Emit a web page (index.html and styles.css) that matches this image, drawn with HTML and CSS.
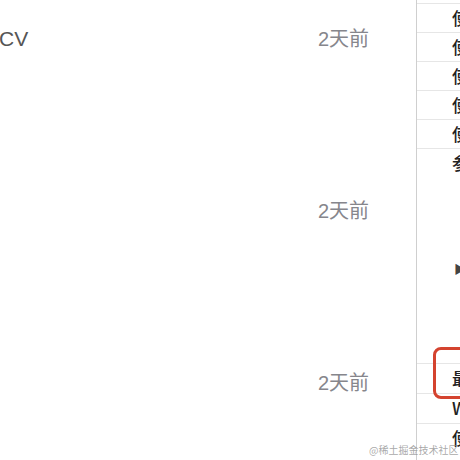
FILE: index.html
```html
<!DOCTYPE html>
<html lang="zh">
<head>
<meta charset="utf-8">
<link rel="stylesheet" href="styles.css">
</head>
<body>
<div class="page">
  <div class="list">
    <div class="item"><span class="title">CV</span><span class="time">2天前</span></div>
    <div class="item"><span class="title"></span><span class="time">2天前</span></div>
    <div class="item"><span class="title"></span><span class="time">2天前</span></div>
  </div>
  <div class="panel">
    <div class="row">使</div>
    <div class="row">使</div>
    <div class="row">使</div>
    <div class="row">使</div>
    <div class="row">使</div>
    <div class="row last">参</div>
    <div class="arrow">▶</div>
    <div class="row">最</div>
    <div class="row">W</div>
    <div class="row">使</div>
    <div class="highlight"></div>
  </div>
</div>
<div class="watermark">@稀土掘金技术社区</div>
</body>
</html>
```

FILE: styles.css
```css
html, body {
  margin: 0;
  padding: 0;
  width: 460px;
  height: 460px;
  overflow: hidden;
  background: #fff;
}
body {
  position: relative;
  font-family: "Noto Sans CJK SC", "Liberation Sans", sans-serif;
}
.page {
  display: flex;
  width: 520px;
  height: 460px;
}
.list {
  width: 416px;
  flex: none;
  padding-top: 25px;
}
.item {
  height: 172px;
  display: flex;
  align-items: flex-start;
  justify-content: space-between;
  padding-right: 47px;
  font-family: "Liberation Sans", "Noto Sans CJK SC", sans-serif;
}
.title {
  font-size: 21px;
  line-height: 28px;
  color: #555;
  margin-left: -1px;
}
.time {
  font-size: 20px;
  line-height: 28px;
  color: #86868c;
}
.panel {
  position: relative;
  flex: none;
  width: 100px;
  border-left: 1px solid #cfcfcf;
  padding-top: 3px;
}
.row {
  height: 30px;
  box-sizing: border-box;
  border-top: 1px solid #e6e6e6;
  padding-left: 35px;
  font-size: 17px;
  line-height: 28px;
  color: #222;
  font-weight: 500;
}
.row:nth-child(-n+6) {
  height: 29px;
  line-height: 27px;
}
.arrow {
  margin-top: 77px;
  height: 29px;
  padding-left: 37px;
  font-size: 12px;
  line-height: 29px;
  color: #444;
  margin-bottom: 80px;
}
.highlight {
  position: absolute;
  left: 16px;
  top: 347px;
  width: 90px;
  height: 46px;
  border: 3px solid #d4432f;
  border-radius: 8px;
}
.watermark {
  position: absolute;
  left: 369px;
  top: 442px;
  white-space: nowrap;
  font-size: 10px;
  line-height: 16px;
  color: rgba(140, 140, 140, 0.75);
  font-family: "Noto Sans CJK SC", sans-serif;
}
```
